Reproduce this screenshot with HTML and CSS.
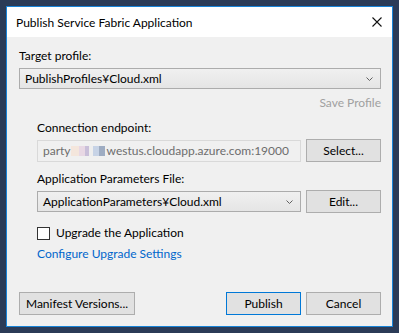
FILE: index.html
```html
<!DOCTYPE html>
<html lang="en">
<head>
  <meta charset="UTF-8" />
  <title>Publish Service Fabric Application</title>
  <link rel="stylesheet" href="styles.css">
</head>
<body>
  <div class="window">
    <div class="titlebar">
      <span class="title">Publish Service Fabric Application</span>
      <svg class="close" width="10" height="10" viewBox="0 0 10 10">
        <path d="M0.5 0.5 L9.5 9.5 M9.5 0.5 L0.5 9.5" stroke="#111" stroke-width="1.1" />
      </svg>
    </div>

    <div class="content">
      <div class="label">Target profile:</div>
      <div class="combo wide">
        <span>PublishProfiles¥Cloud.xml</span>
        <svg class="chev" width="7" height="4" viewBox="0 0 7 4"><path d="M0.5 0.5 L3.5 3.5 L6.5 0.5" stroke="#606060" fill="none" /></svg>
      </div>
      <div class="save">Save Profile</div>

      <div class="section">
        <div class="label">Connection endpoint:</div>
        <div class="row">
          <div class="textbox">party<span class="blur"></span>westus.cloudapp.azure.com:19000</div>
          <button class="btn">Select...</button>
        </div>

        <div class="label params">Application Parameters File:</div>
        <div class="row">
          <div class="combo">
            <span>ApplicationParameters¥Cloud.xml</span>
            <svg class="chev" width="7" height="4" viewBox="0 0 7 4"><path d="M0.5 0.5 L3.5 3.5 L6.5 0.5" stroke="#606060" fill="none" /></svg>
          </div>
          <button class="btn">Edit...</button>
        </div>

        <label class="check"><span class="box"></span>Upgrade the Application</label>
        <a class="link" href="#">Configure Upgrade Settings</a>
      </div>

      <div class="footer">
        <button class="btn manifest">Manifest Versions...</button>
        <div class="right">
          <button class="btn default">Publish</button>
          <button class="btn">Cancel</button>
        </div>
      </div>
    </div>
  </div>
</body>
</html>
```

FILE: styles.css
```css
body {
  margin: 0;
  width: 399px;
  height: 333px;
  background-color: #2b3b57;
  padding: 6px 0 0 6px;
  box-sizing: border-box;
  font-family: Lato, "Noto Sans", sans-serif;
  font-size: 12px;
  color: #000;
  overflow: hidden;
}

.window {
  width: 387px;
  height: 321px;
  box-sizing: border-box;
  border: 1px solid #1883d7;
  display: flex;
  flex-direction: column;
}

.titlebar {
  height: 30px;
  background: #fff;
  display: flex;
  align-items: center;
  justify-content: space-between;
  padding: 0 10px 0 9px;
}

.title {
  font-size: 12px;
}

.content {
  flex: 1;
  background: #f0f0f0;
  display: flex;
  flex-direction: column;
  padding: 11px 11px 11px 12px;
}

.label {
  line-height: 16px;
}

.combo {
  height: 21px;
  box-sizing: border-box;
  border: 1px solid #acacac;
  background: linear-gradient(#f0f0f0, #e5e5e5);
  display: flex;
  align-items: center;
  justify-content: space-between;
  padding: 0 7px 0 5px;
  flex: 1;
  min-width: 0;
}

.combo.wide {
  flex: none;
  margin-top: 4px;
}

.save {
  text-align: right;
  color: #a0a0a0;
  line-height: 16px;
  margin-top: 6px;
}

.section {
  display: flex;
  flex-direction: column;
  padding-left: 18px;
  margin-top: 9px;
}

.row {
  display: flex;
  align-items: center;
  gap: 5px;
  height: 23px;
  margin-top: 3px;
}

.textbox {
  flex: 1;
  min-width: 0;
  overflow: hidden;
  height: 22px;
  box-sizing: border-box;
  border: 1px solid #d9d9d9;
  background: #f0f0f0;
  color: #6d6d6d;
  padding: 0 5px;
  display: flex;
  align-items: center;
  white-space: nowrap;
}

.blur {
  display: inline-block;
  flex: none;
  width: 36px;
  height: 10px;
  margin-top: 1px;
  background: linear-gradient(90deg, #f4e6dc 0 8px, #e8d8e4 8px 14px, #c9bfd9 14px 18px, #eeeeee 18px 22px, #c7d3e6 22px 28px, #9eacc2 28px 34px, #f0f0f0 34px);
}

.btn {
  width: 75px;
  height: 23px;
  box-sizing: border-box;
  border: 1px solid #adadad;
  background: #e1e1e1;
  font-family: inherit;
  font-size: 12px;
  color: #000;
  padding: 0;
  flex: none;
}

.btn.default {
  border-color: #0078d7;
}

.params {
  margin-top: 9px;
}

.check {
  display: flex;
  align-items: center;
  gap: 6px;
  margin-top: 12px;
  line-height: 16px;
}

.box {
  width: 13px;
  height: 13px;
  box-sizing: border-box;
  border: 1px solid #333;
  background: #fff;
}

.link {
  color: #0066cc;
  text-decoration: none;
  line-height: 16px;
  margin-top: 5px;
}

.footer {
  margin-top: auto;
  display: flex;
  justify-content: space-between;
}

.manifest {
  width: 116px;
}

.right {
  display: flex;
  gap: 5px;
}
```
